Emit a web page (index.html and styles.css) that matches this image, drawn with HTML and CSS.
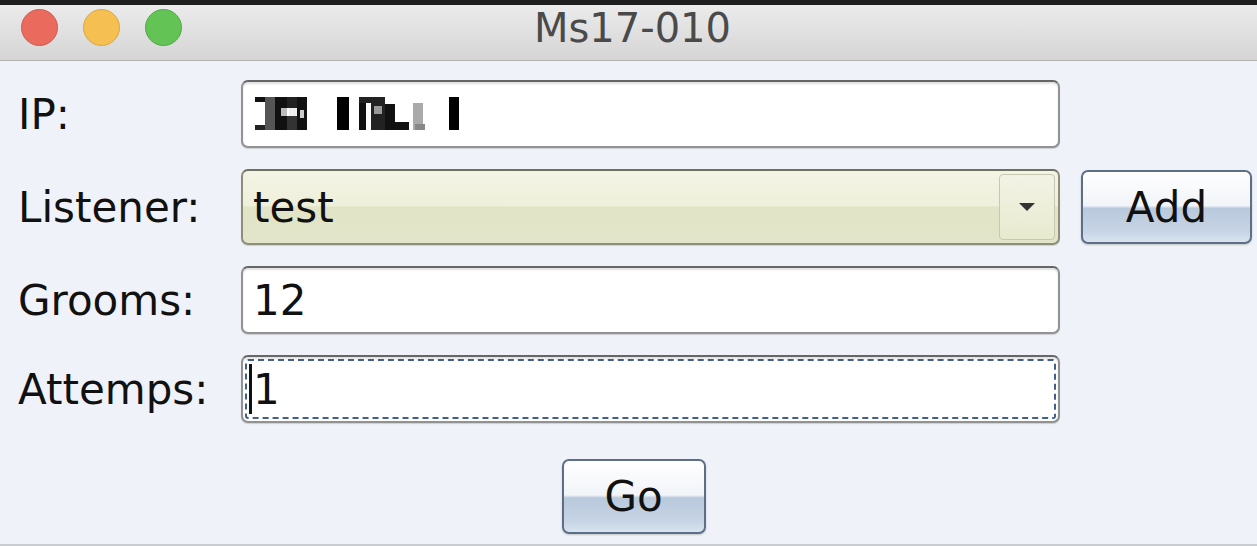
FILE: index.html
```html
<!DOCTYPE html>
<html>
<head>
<meta charset="utf-8">
<link rel="stylesheet" href="styles.css">
</head>
<body>
<div class="topstrip"></div>
<div class="window">
  <div class="titlebar">
    <div class="lights">
      <span class="light red"></span>
      <span class="light yellow"></span>
      <span class="light green"></span>
    </div>
    <div class="title">Ms17-010</div>
  </div>
  <div class="content">
    <div class="form">
      <div class="label">IP:</div>
      <div class="field">
        <svg class="redact" width="210" height="36" viewBox="0 0 210 36">
          <rect x="0" y="1" width="10" height="5" fill="#111"/>
          <rect x="0" y="29" width="18" height="5" fill="#222"/>
          <rect x="10" y="1" width="10" height="33" fill="#555"/>
          <rect x="20" y="1" width="12" height="33" fill="#111"/>
          <rect x="26" y="12" width="6" height="8" fill="#bbb"/>
          <rect x="32" y="1" width="10" height="11" fill="#222"/>
          <rect x="32" y="20" width="10" height="14" fill="#333"/>
          <rect x="34" y="12" width="8" height="8" fill="#eee"/>
          <rect x="42" y="1" width="10" height="33" fill="#111"/>
          <rect x="45" y="14" width="4" height="8" fill="#ccc"/>
          <rect x="82" y="1" width="12" height="33" fill="#000"/>
          <rect x="104" y="1" width="12" height="6" fill="#222"/>
          <rect x="104" y="7" width="7" height="27" fill="#111"/>
          <rect x="116" y="1" width="14" height="33" fill="#222"/>
          <rect x="119" y="10" width="8" height="8" fill="#999"/>
          <rect x="130" y="8" width="10" height="26" fill="#111"/>
          <rect x="140" y="26" width="14" height="8" fill="#111"/>
          <rect x="158" y="7" width="10" height="27" fill="#aaa"/>
          <rect x="160" y="28" width="10" height="6" fill="#888"/>
          <rect x="194" y="1" width="10" height="33" fill="#000"/>
        </svg>
      </div>
      <div></div>

      <div class="label">Listener:</div>
      <div class="combo">
        <span class="combo-text">test</span>
        <span class="combo-arrow"><span class="tri"></span></span>
      </div>
      <div class="side"><button class="btn add">Add</button></div>

      <div class="label">Grooms:</div>
      <div class="field">12</div>
      <div></div>

      <div class="label">Attemps:</div>
      <div class="field focused"><span class="caret"></span>1</div>
      <div></div>
    </div>
    <div class="actions">
      <button class="btn go">Go</button>
    </div>
  </div>
</div>
</body>
</html>
```

FILE: styles.css
```css
* { box-sizing: border-box; }
html, body {
  margin: 0;
  padding: 0;
  width: 1257px;
  height: 546px;
  overflow: hidden;
  background: #eff2f8;
  font-family: "DejaVu Sans", "Liberation Sans", sans-serif;
}
.topstrip {
  height: 5px;
  background: #1f1f1f;
}
.window {
  height: 541px;
  border-bottom: 2px solid #c9ccd1;
  background: #eff2f8;
}
.titlebar {
  position: relative;
  height: 56px;
  background: linear-gradient(#ebebeb, #d5d5d5);
  border-bottom: 1px solid #b3b3b3;
  display: flex;
  align-items: center;
  justify-content: center;
}
.lights {
  position: absolute;
  left: 21px;
  top: 4px;
  display: flex;
  gap: 25px;
}
.light {
  width: 37px;
  height: 37px;
  border-radius: 50%;
  display: block;
}
.red { background: #ea6a5e; border: 1px solid #d35a4f; }
.yellow { background: #f5bf51; border: 1px solid #dea73e; }
.green { background: #63c355; border: 1px solid #52a946; }
.title {
  font-size: 40px;
  color: #4a4a4a;
  margin-left: 8px;
  margin-top: -9px;
}
.content {
  padding: 19px 0 0 18px;
}
.form {
  display: grid;
  grid-template-columns: 223px 819px 192px;
  grid-auto-rows: auto;
  row-gap: 21px;
  align-items: center;
}
.label {
  font-size: 42px;
  color: #111;
  line-height: 1;
  margin-top: 2px;
}
.field {
  height: 68px;
  background: #fff;
  border: 2px solid #929292;
  border-top-color: #666;
  border-radius: 7px;
  box-shadow: 0 1px 1px rgba(0,0,0,0.15), inset 0 2px 2px rgba(0,0,0,0.12);
  font-size: 42px;
  color: #111;
  padding-left: 10px;
  display: flex;
  align-items: center;
}
.redact { display: block; margin-left: 2px; }
.field.focused {
  outline: 2px dashed #42608a;
  outline-offset: -6px;
  padding-left: 6px;
}
.caret {
  display: inline-block;
  width: 3px;
  height: 50px;
  background: #111;
  margin-right: 1px;
}
.combo {
  height: 76px;
  border: 2px solid #8e8f78;
  border-top-color: #6f7060;
  border-radius: 7px;
  background: linear-gradient(#f3f4e4 0%, #eef0db 48%, #e1e4c6 50%, #e2e5c9 100%);
  box-shadow: 0 1px 1px rgba(0,0,0,0.15);
  display: flex;
  align-items: stretch;
  padding: 3px;
}
.combo-text {
  flex: 1;
  font-size: 42px;
  color: #111;
  padding-left: 7px;
  display: flex;
  align-items: center;
}
.combo-arrow {
  width: 56px;
  border: 1px solid #c7c8b2;
  border-radius: 4px;
  background: linear-gradient(#f2f3e5, #e8eacf);
  display: flex;
  align-items: center;
  justify-content: center;
}
.tri {
  width: 0;
  height: 0;
  border-left: 8px solid transparent;
  border-right: 8px solid transparent;
  border-top: 8px solid #333;
}
.side {
  padding-left: 21px;
}
.btn {
  font-family: "DejaVu Sans", "Liberation Sans", sans-serif;
  font-size: 42px;
  color: #111;
  border: 2px solid #5d6f86;
  border-radius: 7px;
  background: linear-gradient(#ffffff 0%, #f1f4f8 48%, #b9c9dc 52%, #c6d4e5 85%, #dae4ef 100%);
  box-shadow: 0 1px 2px rgba(0,0,0,0.2);
  padding: 0;
  display: flex;
  align-items: center;
  justify-content: center;
}
.add {
  width: 171px;
  height: 74px;
}
.actions {
  display: flex;
  justify-content: center;
  margin-top: 36px;
  padding-right: 8px;
}
.go {
  width: 144px;
  height: 75px;
}
```
